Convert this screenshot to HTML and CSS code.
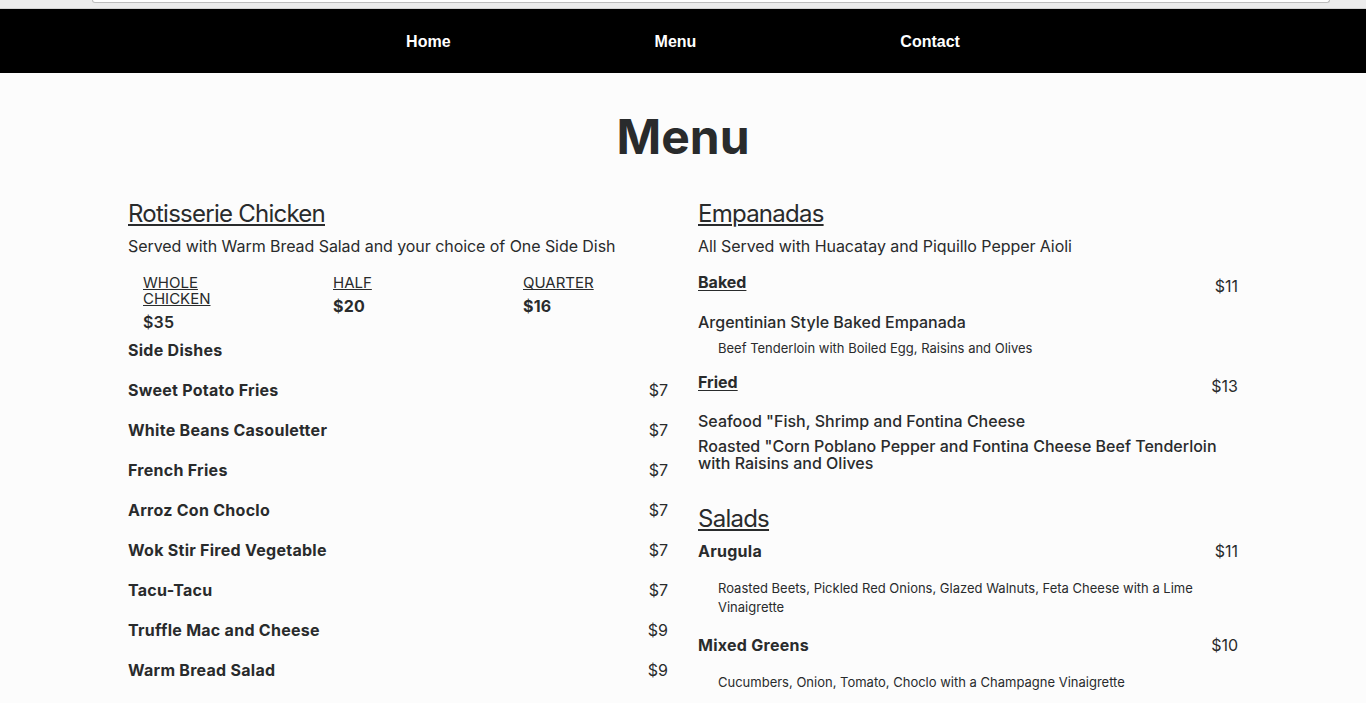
FILE: index.html
```html
<!DOCTYPE html>
<html lang="en">
<head>
<meta charset="utf-8">
<title>Menu</title>
<link rel="stylesheet" href="styles.css">
</head>
<body>
<div class="chrome"><div class="chrome-field"></div></div>
<nav class="topnav">
  <a href="#" class="topnav-link">Home</a>
  <a href="#" class="topnav-link">Menu</a>
  <a href="#" class="topnav-link">Contact</a>
</nav>
<main class="container">
  <h1 class="page-title">Menu</h1>
  <div class="columns">
    <section class="col">
      <h2 class="section-title">Rotisserie Chicken</h2>
      <p class="section-sub">Served with Warm Bread Salad and your choice of One Side Dish</p>
      <div class="sizes">
        <div class="size">
          <span class="size-name narrow">WHOLE CHICKEN</span>
          <span class="size-price semi">$35</span>
        </div>
        <div class="size">
          <span class="size-name">HALF</span>
          <span class="size-price">$20</span>
        </div>
        <div class="size">
          <span class="size-name">QUARTER</span>
          <span class="size-price">$16</span>
        </div>
      </div>
      <h6 class="group-title">Side Dishes</h6>
      <ul class="items">
        <li class="item"><span class="item-name">Sweet Potato Fries</span><span class="item-price">$7</span></li>
        <li class="item"><span class="item-name">White Beans Casouletter</span><span class="item-price">$7</span></li>
        <li class="item"><span class="item-name">French Fries</span><span class="item-price">$7</span></li>
        <li class="item"><span class="item-name">Arroz Con Choclo</span><span class="item-price">$7</span></li>
        <li class="item"><span class="item-name">Wok Stir Fired Vegetable</span><span class="item-price">$7</span></li>
        <li class="item"><span class="item-name">Tacu-Tacu</span><span class="item-price">$7</span></li>
        <li class="item"><span class="item-name">Truffle Mac and Cheese</span><span class="item-price">$9</span></li>
        <li class="item"><span class="item-name">Warm Bread Salad</span><span class="item-price">$9</span></li>
      </ul>
    </section>
    <section class="col">
      <div class="block">
        <h2 class="section-title">Empanadas</h2>
        <p class="section-sub">All Served with Huacatay and Piquillo Pepper Aioli</p>
        <div class="variant">
          <span class="variant-name">Baked</span>
          <span class="variant-price">$11</span>
        </div>
        <h6 class="dish-title">Argentinian Style Baked Empanada</h6>
        <p class="dish-desc">Beef Tenderloin with Boiled Egg, Raisins and Olives</p>
        <div class="variant">
          <span class="variant-name">Fried</span>
          <span class="variant-price">$13</span>
        </div>
        <h6 class="dish-title">Seafood "Fish, Shrimp and Fontina Cheese</h6>
        <h6 class="dish-title last">Roasted "Corn Poblano Pepper and Fontina Cheese Beef Tenderloin with Raisins and Olives</h6>
      </div>
      <div class="block salads">
        <h2 class="section-title">Salads</h2>
        <div class="salad">
          <div class="salad-row"><span class="item-name">Arugula</span><span class="item-price">$11</span></div>
          <p class="salad-desc">Roasted Beets, Pickled Red Onions, Glazed Walnuts, Feta Cheese with a Lime Vinaigrette</p>
        </div>
        <div class="salad">
          <div class="salad-row"><span class="item-name">Mixed Greens</span><span class="item-price">$10</span></div>
          <p class="salad-desc">Cucumbers, Onion, Tomato, Choclo with a Champagne Vinaigrette</p>
        </div>
      </div>
    </section>
  </div>
</main>
</body>
</html>
```
FILE: styles.css
```css
html, body {
  margin: 0;
  padding: 0;
}

body {
  background: #fcfcfc;
  color: #292b2c;
  font-family: Inter, "Noto Sans", "Liberation Sans", sans-serif;
  font-size: 16px;
}

.chrome {
  height: 8px;
  background: #ececec;
  border-bottom: 1px solid #d2d2d2;
}

.chrome-field {
  margin-left: 92px;
  width: 1236px;
  height: 2px;
  background: #ffffff;
  border: 1px solid #bdbdbd;
  border-top: none;
  border-radius: 0 0 4px 4px;
}

.topnav {
  height: 64px;
  background: #000;
  display: flex;
  justify-content: center;
  align-items: center;
  gap: 204px;
}

.topnav-link {
  color: #fff;
  text-decoration: none;
  font-family: "Liberation Sans", Arial, sans-serif;
  font-weight: 700;
  font-size: 16px;
  line-height: 18px;
  padding-top: 1px;
}

.container {
  width: 1140px;
  margin: 0 auto;
  padding: 36px 15px 0;
  box-sizing: border-box;
}

.page-title {
  margin: 0 0 35px;
  font-size: 48px;
  line-height: 56px;
  font-weight: 700;
  text-align: center;
}

.columns {
  display: grid;
  grid-template-columns: 540px 540px;
  column-gap: 30px;
  align-items: start;
}

.section-title {
  margin: 0 0 6px;
  font-size: 24px;
  line-height: 28px;
  font-weight: 400;
  letter-spacing: -0.75px;
  text-decoration: underline;
  text-decoration-thickness: 2px;
  text-underline-offset: 2px;
}

.section-sub {
  margin: 0;
  font-size: 16px;
  line-height: 24px;
  letter-spacing: -0.06px;
}

.sizes {
  margin-top: 17px;
  padding-left: 15px;
  display: grid;
  grid-template-columns: 190px 190px 160px;
  align-items: start;
}

.size-name {
  display: block;
  font-size: 15px;
  line-height: 16px;
  text-decoration: underline;
  text-underline-offset: 1px;
}

.size-name.narrow {
  width: 90px;
}

.size-price {
  display: block;
  margin-top: 7px;
  font-size: 16px;
  line-height: 16px;
  font-weight: 700;
  letter-spacing: 0.2px;
}

.size-price.semi {
  font-weight: 600;
}

.group-title {
  margin: 10px 0 10px;
  font-size: 16px;
  line-height: 20px;
  font-weight: 700;
  letter-spacing: 0.27px;
}

.items {
  list-style: none;
  margin: 0;
  padding: 0;
}

.item {
  height: 40px;
  display: flex;
  justify-content: space-between;
  align-items: center;
}

.item-name {
  font-weight: 700;
  letter-spacing: 0.27px;
}

.item-price {
  font-weight: 400;
}

.variant {
  margin-top: 14px;
  margin-bottom: 17.5px;
  display: flex;
  justify-content: space-between;
  align-items: flex-start;
  line-height: 20px;
}

.variant-name {
  font-weight: 700;
  text-decoration: underline;
  text-underline-offset: 2px;
}

.variant-price {
  padding-top: 4px;
}

.dish-title {
  margin: 0 0 8px;
  font-size: 16px;
  line-height: 17px;
  font-weight: 500;
}

.dish-title.last {
  margin-bottom: 0;
}

.dish-desc,
.salad-desc {
  margin: 0;
  padding-left: 20px;
  font-size: 13px;
  line-height: 19px;
}

.salads {
  margin-top: 33px;
}

.salad-row {
  display: flex;
  justify-content: space-between;
  line-height: 20px;
  margin-top: 8px;
}

.salad + .salad .salad-row {
  margin-top: 18px;
}

.salad-desc {
  margin-top: 18px;
}
```
